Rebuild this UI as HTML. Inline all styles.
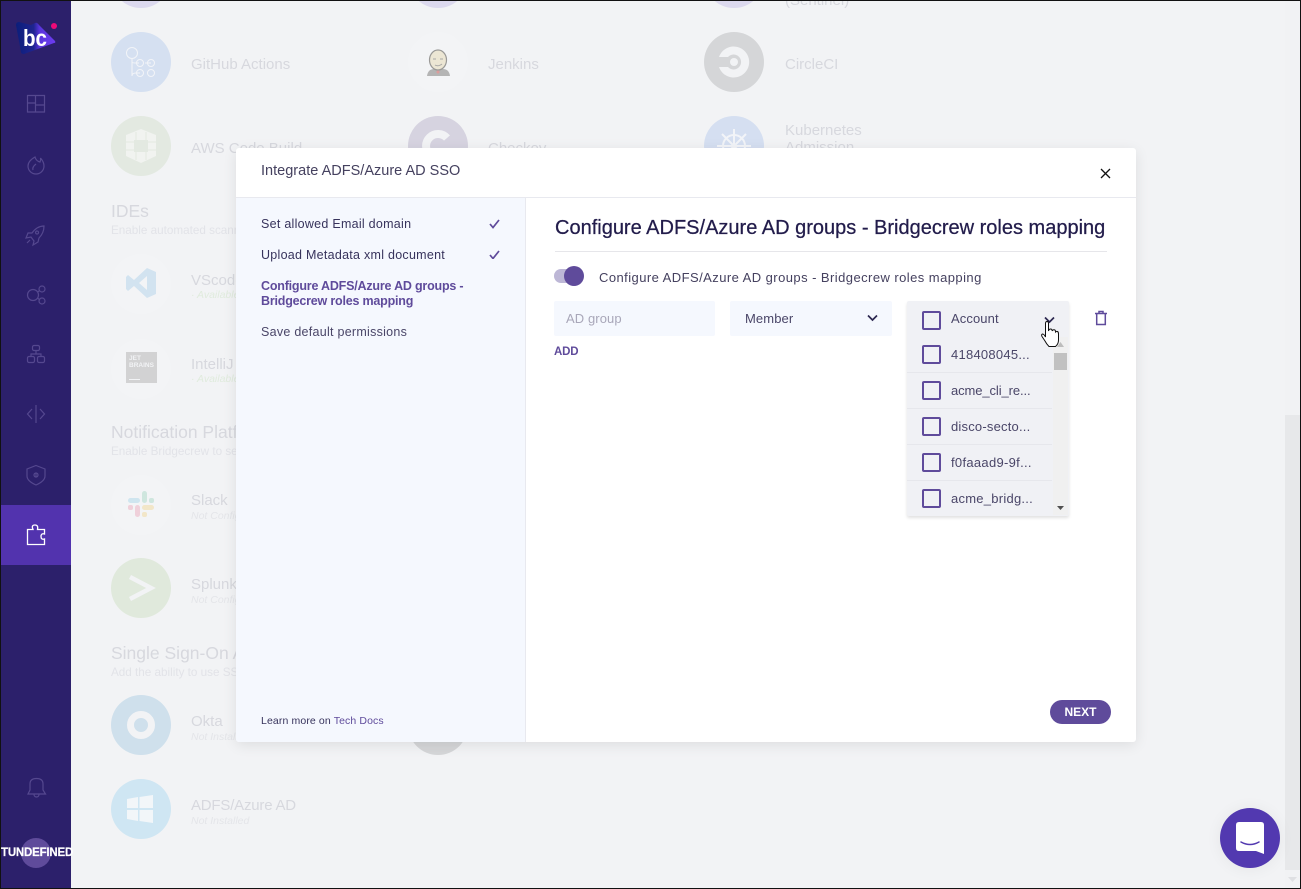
<!DOCTYPE html>
<html><head><meta charset="utf-8"><style>
*{box-sizing:border-box}
html,body{margin:0;padding:0;width:1301px;height:889px;overflow:hidden;background:#f2f3f5;font-family:"Liberation Sans",sans-serif}
.a{position:absolute;white-space:nowrap}
.c{position:absolute;width:60px;height:60px;border-radius:50%}
.bt{position:absolute;color:#d7d8de;font-size:15px;margin-top:1px;white-space:nowrap}
.bs{position:absolute;color:#e4e5e9;font-size:10.500px;font-style:italic;margin-top:1px;white-space:nowrap}
.h{position:absolute;color:#d7d8de;font-size:17.500px;white-space:nowrap}
.hs{position:absolute;color:#e2e3e8;font-size:11.700px;white-space:nowrap}
.ic{position:absolute;left:0;top:0}
.cb{position:absolute;left:15px;width:19px;height:19px;border:2px solid #5f4b9b;border-radius:2px}
.it{position:absolute;left:44px;font-size:13px;color:#4a4668;white-space:nowrap}
.sep{position:absolute;left:0;width:145px;height:1px;background:#e6e7ec}
.st{position:absolute;font-size:12.500px;color:#37335c;white-space:nowrap;letter-spacing:.27px}
</style></head><body>
<!-- background -->
<div class="c" style="left:111px;top:-52px;background:#dcd9ee"></div>
<div class="c" style="left:408px;top:-52px;background:#dcd9ee"></div>
<div class="c" style="left:704px;top:-52px;background:#dcd9ee"></div>
<div class="bt" style="left:785px;top:-9px">(Sentinel)</div>
<div class="c" style="left:111px;top:32px;background:#d5e0f1"></div>
<svg class="a" style="left:111px;top:32px" width="60" height="60" fill="none" stroke="#f2f4f8" stroke-width="1"><circle cx="21" cy="21" r="5.500"/><path d="M21 27V44Q21 41 25 41H29M21 30Q21 31 25 31H28M34 31H40"/><circle cx="29" cy="31" r="3.500"/><circle cx="40" cy="31" r="3.500"/><circle cx="29" cy="41" r="3.500"/><circle cx="40" cy="41" r="3.500"/></svg>
<div class="bt" style="left:191px;top:55px">GitHub Actions</div>
<div class="c" style="left:408px;top:32px;background:#f3f4f6"></div>
<svg class="a" style="left:425px;top:46px" width="28" height="32"><path d="M2 30Q3 23 9 23H18Q24 23 25 30Z" fill="#b4b4b4"/><ellipse cx="13" cy="14" rx="8.500" ry="10" fill="#ece6d4" stroke="#9a9997" stroke-width="1.200"/><path d="M8 13H11M15 13H18M10 19Q13 21 17 18" stroke="#a9a8a6" fill="none"/><circle cx="13" cy="26" r="1.500" fill="#dc9c9c"/></svg>
<div class="bt" style="left:488px;top:55px">Jenkins</div>
<div class="c" style="left:704px;top:32px;background:#d5d6d8"></div>
<svg class="a" style="left:704px;top:32px" width="60" height="60" fill="none"><path d="M15 25A15.500 15.500 0 1 1 15 35H24A7.500 7.500 0 1 0 24 25Z" fill="#f2f3f5"/><circle cx="30" cy="30" r="4" fill="#f2f3f5"/></svg>
<div class="bt" style="left:785px;top:55px">CircleCI</div>
<div class="c" style="left:111px;top:116px;background:#e3e9e1"></div>
<svg class="a" style="left:124px;top:128px" width="34" height="36"><path d="M2 7L17 1L32 7V28L17 35L2 28Z" fill="#f1f3f0"/><path d="M12 4V32M22 4V32M2 14H10M2 22H10M24 14H32M24 22H32" stroke="#e3e9e1" stroke-width="1"/><rect x="10" y="12" width="14" height="12" fill="#e3e9e1"/></svg>
<div class="bt" style="left:191px;top:139px">AWS Code Build</div>
<div class="c" style="left:408px;top:116px;background:#d6d3e0"></div>
<svg class="a" style="left:408px;top:116px" width="60" height="60"><path d="M39 22A12 12 0 1 0 39 38" fill="none" stroke="#f2f3f5" stroke-width="8"/></svg>
<div class="bt" style="left:488px;top:139px">Checkov</div>
<div class="c" style="left:704px;top:116px;background:#d5dff1"></div>
<svg class="a" style="left:704px;top:116px" width="60" height="60" fill="none" stroke="#f2f4f8" stroke-width="2"><circle cx="30" cy="30" r="11"/><path d="M30 13V47M13 30H47M18 18L42 42M42 18L18 42"/></svg>
<div class="bt" style="left:785px;top:121px">Kubernetes</div>
<div class="bt" style="left:785px;top:138px">Admission</div>

<div class="h" style="left:111px;top:201px">IDEs</div>
<div class="hs" style="left:111px;top:224px">Enable automated scanning</div>
<div class="c" style="left:111px;top:254px;background:#f3f4f6"></div>
<svg class="a" style="left:125px;top:267px" width="32" height="32"><path d="M22 1L31 5V27L22 31L9 19L3 24L1 22V10L3 8L9 13ZM22 9L14 16L22 23Z" fill="#d2e3f0"/></svg>
<div class="bt" style="left:191px;top:271px">VScode</div>
<div class="bs" style="left:191px;top:288px;color:#e0ebdd">· Available</div>
<div class="c" style="left:111px;top:339px;background:#f3f4f6"></div>
<div class="a" style="left:126px;top:352px;width:31px;height:31px;background:#d2d2d3;color:#f2f3f5;font-size:6.500px;font-weight:bold;line-height:7px;padding:3px 3px">JET<br>BRAINS<div style="position:absolute;left:3px;bottom:3px;width:11px;height:1px;background:#f2f3f5"></div></div>
<div class="bt" style="left:191px;top:355px">IntelliJ</div>
<div class="bs" style="left:191px;top:372px;color:#e0ebdd">· Available</div>

<div class="h" style="left:111px;top:422px">Notification Platforms</div>
<div class="hs" style="left:111px;top:445px">Enable Bridgecrew to send</div>
<div class="c" style="left:111px;top:475px;background:#f3f4f6"></div>
<svg class="a" style="left:127px;top:490px" width="28" height="28"><rect x="1" y="8" width="12" height="5" rx="2.500" fill="#cfe5ef"/><rect x="15" y="1" width="5" height="12" rx="2.500" fill="#cfe6de"/><rect x="22" y="8" width="5" height="5" rx="2" fill="#cfe6de"/><rect x="1" y="15" width="5" height="5" rx="2" fill="#efd0da"/><rect x="8" y="15" width="5" height="12" rx="2.500" fill="#efd0da"/><rect x="15" y="15" width="12" height="5" rx="2.500" fill="#f2e6c8"/><rect x="15" y="22" width="5" height="5" rx="2" fill="#f2e6c8"/></svg>
<div class="bt" style="left:191px;top:491px">Slack</div>
<div class="bs" style="left:191px;top:509px">Not Configured</div>
<div class="c" style="left:111px;top:558px;background:#e0e9dc"></div>
<svg class="a" style="left:111px;top:558px" width="60" height="60" fill="none" stroke="#f2f3f5" stroke-width="4.500"><path d="M19 19L40 30L19 41"/></svg>
<div class="bt" style="left:191px;top:575px">Splunk</div>
<div class="bs" style="left:191px;top:593px">Not Configured</div>

<div class="h" style="left:111px;top:643px">Single Sign-On Apps</div>
<div class="hs" style="left:111px;top:666px">Add the ability to use SSO</div>
<div class="c" style="left:111px;top:695px;background:#cfe0ec"></div>
<div class="a" style="left:127px;top:711px;width:28px;height:28px;border-radius:50%;border:7px solid #f2f3f5"></div>
<div class="bt" style="left:191px;top:712px">Okta</div>
<div class="bs" style="left:191px;top:730px">Not Installed</div>
<div class="c" style="left:408px;top:695px;background:#d5d6d8"></div>
<div class="c" style="left:111px;top:779px;background:#cfe6f3"></div>
<svg class="a" style="left:126px;top:795px" width="28" height="28" fill="#f2f6f9"><path d="M1 4L12 2V13H1ZM13.500 2L27 0V13H13.500ZM1 15H12V26L1 24ZM13.500 15H27V28L13.500 26Z"/></svg>
<div class="bt" style="left:191px;top:796px;letter-spacing:-.2px">ADFS/Azure AD</div>
<div class="bs" style="left:191px;top:814px">Not Installed</div>

<!-- page scrollbar -->
<div class="a" style="left:1285px;top:0;width:15px;height:889px;background:#f1f2f4"></div>
<div class="a" style="left:1285px;top:415px;width:15px;height:455px;background:#e7e8ea"></div>
<svg class="a" style="left:1285px;top:875px" width="15" height="10"><path d="M3 2H12L7.500 7Z" fill="#dfe0e3"/></svg>

<!-- sidebar -->
<div class="a" style="left:1px;top:1px;width:70px;height:887px;background:#2c206b"></div>
<div class="a" style="left:1px;top:505px;width:70px;height:60px;background:#5233ae"></div>
<svg class="a" style="left:0;top:0" width="71" height="70"><defs><linearGradient id="g" x1="0" x2="1"><stop offset="0" stop-color="#0b1e7a"/><stop offset=".45" stop-color="#1f2490"/><stop offset=".6" stop-color="#5a35dc"/><stop offset="1" stop-color="#6d3cf0"/></linearGradient></defs><path d="M16 25Q16 22 19 22L31 25L35 23Q37 22 39 25L55 41Q56 43 54 43L24 54Q21 54 21 52Z" fill="url(#g)"/><circle cx="54" cy="26" r="3" fill="#ee0a78"/><text x="23" y="46" font-family="Liberation Sans" font-size="23" font-weight="bold" fill="#fff" textLength="24" lengthAdjust="spacingAndGlyphs">bc</text></svg>
<svg class="ic" width="71" height="889" fill="none" stroke="#55488f" stroke-width="1.200">
<path d="M27.500 95.500H44.500V112H27.500ZM35.500 95.500V112M27.500 103H35.500M35.500 105H44.500"/>
<path d="M35 157Q36 161 40 162Q41 160 40.500 158Q44 162 44 166A8 8 0 0 1 28 166Q28 161 35 157ZM36 164Q32 167 33 170"/>
<path d="M44 226Q37 226 32 233L28 233L26 238L31 237L34 241L33 245L38 242L39 238Q44 233 44 226ZM30 240L27 243M37 231a1.500 1.500 0 1 0 .1 0"/>
<circle cx="33" cy="295" r="5.500"/><circle cx="42" cy="289" r="3"/><circle cx="42" cy="301" r="3"/><path d="M37.500 292L40 290.500M37.500 298L40 300"/>
<rect x="32.500" y="345.500" width="7" height="5" rx="1.500"/><rect x="27.500" y="356.500" width="7" height="6" rx="1.500"/><rect x="37.500" y="356.500" width="7" height="6" rx="1.500"/><path d="M36 350.500V354M31 356.500V354H41V356.500"/>
<path d="M32 409L27.500 414L32 419M40 409L44.500 414L40 419M36 405V423" />
<path d="M36 465.500L45 469V476Q45 481 36 485Q27 481 27 476V469ZM36 477V473"/><circle cx="36" cy="475" r="2"/>
<path d="M30 784Q30 778.500 36.500 778.500Q43 778.500 43 784V790L45.500 794H28L30 790ZM34 794.500A2.500 2.500 0 0 0 39 794.500"/>
</svg>
<svg class="ic" width="71" height="889" fill="none" stroke="#fff" stroke-width="1.300"><path d="M27.500 529.500H33Q31 525 35 525Q38.500 525 37.500 529.500H44.500V534Q41 533 41 536.500Q41 540 44.500 539V544.500H27.500Z"/></svg>
<div class="a" style="left:21px;top:838px;width:30px;height:30px;border-radius:50%;background:#5f4b9b"></div>
<div class="a" style="left:1px;top:847px;width:70px;text-align:center;color:#fff;font-size:11.500px;font-weight:bold;letter-spacing:-.2px;-webkit-text-stroke:.2px #fff">TUNDEFINED</div>

<!-- modal -->
<div class="a" style="left:236px;top:148px;width:900px;height:594px;background:#fff;border-radius:3px;box-shadow:0 3px 14px rgba(0,0,0,.09)"></div>
<div class="a" style="left:236px;top:198px;width:289px;height:544px;background:#f5f8fe;border-bottom-left-radius:3px"></div>
<div class="a" style="left:525px;top:198px;width:1px;height:544px;background:#e8e9ef"></div>
<div class="a" style="left:236px;top:197px;width:900px;height:1px;background:#e8e9ef"></div>
<div class="a" style="left:261px;top:163px;font-size:14.500px;color:#45415f;letter-spacing:.01px">Integrate ADFS/Azure AD SSO</div>
<svg class="a" style="left:1100px;top:168px" width="11" height="11" fill="none" stroke="#111" stroke-width="1.300"><path d="M1 1L10 10M10 1L1 10"/></svg>
<div class="st" style="left:261px;top:217px">Set allowed Email domain</div>
<div class="st" style="left:261px;top:248px">Upload Metadata xml document</div>
<div class="st" style="left:261px;top:279px;color:#5f4b9b;font-weight:bold;letter-spacing:-.2px">Configure ADFS/Azure AD groups -</div>
<div class="st" style="left:261px;top:294px;color:#5f4b9b;font-weight:bold;letter-spacing:-.2px">Bridgecrew roles mapping</div>
<div class="st" style="left:261px;top:325px;color:#4a4668">Save default permissions</div>
<svg class="a" style="left:489px;top:219px" width="11" height="40" fill="none" stroke="#5f4b9b" stroke-width="1.700"><path d="M1 5L4 8.500L10 1M1 36L4 39.500L10 32"/></svg>
<div class="a" style="left:261px;top:715px;font-size:10.500px;color:#37335c;letter-spacing:.12px">Learn more on <span style="color:#5f4b9b">Tech Docs</span></div>
<div class="a" style="left:555px;top:217px;font-size:20px;color:#221c4b;letter-spacing:0;-webkit-text-stroke:.25px #221c4b">Configure ADFS/Azure AD groups - Bridgecrew roles mapping</div>
<div class="a" style="left:555px;top:251px;width:552px;height:1px;background:#e6e6ea"></div>
<div class="a" style="left:554px;top:269px;width:24px;height:14px;border-radius:7px;background:#bdb7d6"></div>
<div class="a" style="left:564px;top:266px;width:20px;height:20px;border-radius:50%;background:#5f4b9b"></div>
<div class="a" style="left:599px;top:270px;font-size:13px;color:#45415f;letter-spacing:.44px">Configure ADFS/Azure AD groups - Bridgecrew roles mapping</div>
<div class="a" style="left:554px;top:301px;width:161px;height:35px;background:#f5f8fe;border-radius:2px"></div>
<div class="a" style="left:566px;top:311px;font-size:13px;color:#a9a7b9;letter-spacing:.1px">AD group</div>
<div class="a" style="left:730px;top:301px;width:162px;height:35px;background:#f5f8fe;border-radius:2px"></div>
<div class="a" style="left:745px;top:311px;font-size:13px;color:#4a4668;letter-spacing:.1px">Member</div>
<svg class="a" style="left:867px;top:314px" width="11" height="8" fill="none" stroke="#2c2850" stroke-width="1.700"><path d="M1 1.500L5.500 6L10 1.500"/></svg>
<div class="a" style="left:554px;top:346px;font-size:11.500px;font-weight:bold;color:#5f4b9b;letter-spacing:-.2px">ADD</div>

<!-- dropdown -->
<div class="a" style="left:907px;top:301px;width:162px;height:215px;background:#f0f1f5;border-radius:2px;box-shadow:0 2px 3px rgba(0,0,0,.12)">
<div class="cb" style="top:10px"></div><div class="it" style="top:10px;letter-spacing:.1px">Account</div>
<div class="cb" style="top:44px"></div><div class="it" style="top:46px;letter-spacing:.25px">418408045...</div>
<div class="sep" style="top:71px"></div>
<div class="cb" style="top:80px"></div><div class="it" style="top:82px;letter-spacing:-.1px">acme_cli_re...</div>
<div class="sep" style="top:107px"></div>
<div class="cb" style="top:116px"></div><div class="it" style="top:118px;letter-spacing:.2px">disco-secto...</div>
<div class="sep" style="top:143px"></div>
<div class="cb" style="top:152px"></div><div class="it" style="top:154px;letter-spacing:.3px">f0faaad9-9f...</div>
<div class="sep" style="top:179px"></div>
<div class="cb" style="top:188px"></div><div class="it" style="top:190px;letter-spacing:.25px">acme_bridg...</div>
<div class="a" style="left:146px;top:36px;width:15px;height:178px;background:#f0f0f0"></div>
<div class="a" style="left:147px;top:52px;width:13px;height:17px;background:#c1c1c1"></div>
<svg class="a" style="left:146px;top:38px" width="15" height="172"><path d="M4 8L7.500 3L11 8Z" fill="#bdbdbd"/><path d="M4 167H11L7.500 171Z" fill="#505050"/></svg>
</div>
<svg class="a" style="left:1043px;top:316px" width="14" height="8" fill="none" stroke="#2c2850" stroke-width="1.700"><path d="M2 1.500L6.500 6L11 1.500"/></svg>
<svg class="a" style="left:1094px;top:310px" width="14" height="16" fill="none" stroke="#5f4b9b" stroke-width="1.500"><path d="M1 3.500H13M5 3V1.500H9V3M2.700 3.500V14.500H11.300V3.500"/></svg>
<svg class="a" style="left:1040px;top:320px" width="22" height="29" fill="#fff" stroke="#111" stroke-width="1"><path d="M5.500 3.500Q5.500 1.500 7 1.500Q8.500 1.500 8.500 3.500V11Q9 9 10.700 9Q12 9 12.200 11Q12.800 9.500 14.300 9.800Q15.500 10 15.600 12Q16.500 11 17.500 11.500Q18.500 12 18.500 14V20Q18.500 24 15.500 26.500H9Q6.500 24 5 21L2 16.500Q1 14.500 2.500 14Q4 14 5.500 17Z"/></svg>

<div class="a" style="left:1050px;top:700px;width:61px;height:24px;border-radius:12px;background:#5f4b9b;color:#fff;font-size:12px;font-weight:bold;text-align:center;line-height:24px">NEXT</div>

<!-- chat -->
<div class="a" style="left:1220px;top:808px;width:60px;height:60px;border-radius:50%;background:#5239b0;box-shadow:0 1px 16px rgba(0,0,0,.06)"></div>
<svg class="a" style="left:1236px;top:822px" width="28" height="32"><path d="M3 0H25Q28 0 28 3V32L20 29H3Q0 29 0 26V3Q0 0 3 0Z" fill="#fff"/><path d="M5 20Q14 25 23 20" fill="none" stroke="#5239b0" stroke-width="1.500" stroke-linecap="round"/></svg>

<!-- frame -->
<div class="a" style="left:0;top:0;width:1301px;height:889px;border:1px solid #111;pointer-events:none"></div>
</body></html>
